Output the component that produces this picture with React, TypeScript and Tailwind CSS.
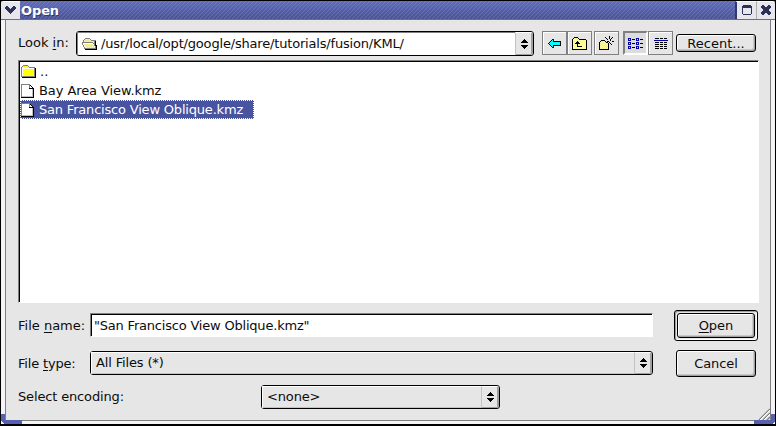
import type { ReactNode } from "react";

const palette: Record<string, string> = {
  k: "#000000", g: "#808080", l: "#c0c0c0", w: "#ffffff", y: "#ffff00",
  p: "#ffff99", v: "#f1f1a0", c: "#00ffff", b: "#0000a8", n: "#2c3158",
};

// Draws a small bitmap, one character per pixel.
function Pixels({ rows, className = "" }: { rows: string[]; className?: string }) {
  return (
    <svg width={rows[0].length} height={rows.length} shapeRendering="crispEdges" className={`block shrink-0 ${className}`}>
      {rows.flatMap((row, y) =>
        [...row].map((ch, x) => palette[ch] && <rect key={`${x}-${y}`} x={x} y={y} width="1" height="1" fill={palette[ch]} />)
      )}
    </svg>
  );
}

const folder = [
  "..ggggg........",
  ".gvyvyvg.......",
  "gvyvyvyvgggggg.",
  "gwwwwwwwwwwwwgk",
  "gwyvyvyvyvyvygk",
  "gwvyvyvyvyvyvgk",
  "gwyvyvyvyvyvygk",
  "gwvyvyvyvyvyvgk",
  "gwyvyvyvyvyvygk",
  "gwvyvyvyvyvyvgk",
  "gwyvyvyvyvyvygk",
  "ggggggggggggggk",
  ".kkkkkkkkkkkkkk",
];
const openFolder = [
  "...ggggg.......",
  "..gvyvyvg......",
  ".gvyvyvyvggggg.",
  ".gyvyvyvyvyvgk.",
  "gggggggggggvgk.",
  "gwwwwwwwwwwggk.",
  "gwvyvyvyvyvwgk.",
  ".gwvyvyvyvyvgkk",
  ".gwyvyvyvyvywgk",
  "..gwvyvyvyvyvgk",
  "..ggggggggggggk",
  "...kkkkkkkkkkkk",
];
const file = [
  "ggggggggg....",
  "gwwwwwwwgk...",
  "gwwwwwwwgwk..",
  "gwwwwwwwgwwk.",
  "gwwwwwwwkkkkk",
  "gwwwwwwwwwwlk",
  "gwwwwwwwwwwlk",
  "gwwwwwwwwwwlk",
  "gwwwwwwwwwwlk",
  "gwwwwwwwwwwlk",
  "gwwwwwwwwwwlk",
  "gwwwwwwwwwwlk",
  "glllllllllllk",
  "kkkkkkkkkkkkk",
];
const back = [
  "....kk.......",
  "...kck.......",
  "..kcckkkkkkkk",
  ".kccccccccck.",
  "kcccccccccck.",
  ".kccccccccck.",
  "..kcckkkkkkkk",
  "...kck.......",
  "....kk.......",
].map((row) => row.replace(/ck\.$/, "cck"));
const parent = [
  "..kkkk.........",
  ".kppppk........",
  "kppppppkkkkkkk.",
  "kpppppppppppppk",
  "kppppkppppppppk",
  "kpppkkkpppppppk",
  "kppkkkkkppppppk",
  "kppppkppppppppk",
  "kppppkppppppppk",
  "kppppkkkkkppppk",
  "kpppppppppppppk",
  "kpppppppppppppk",
  "kkkkkkkkkkkkkkk",
];
const create = [
  "..........k....",
  "......k...k..k.",
  ".......k..k.k..",
  "........k..k...",
  "..kkkk.....k...",
  ".kpypyk.kk...kk",
  "kpypypykk.k....",
  "kypypypypk.k...",
  "kpypypypyk..k..",
  "kypypypypk.....",
  "kpypypypyk.....",
  "kypypypypk.....",
  "kpypypypyk.....",
  "kkkkkkkkkk.....",
];
const listIcon = [
  "bbb.....bbb....",
  "b.b.kkk.b.b.kkk",
  "bbb.....bbb....",
  "...............",
  "bbb.....bbb....",
  "b.b.kkk.b.b.kkk",
  "bbb.....bbb....",
  "...............",
  "bbb.....bbb....",
  "b.b.kkk.b.b.kkk",
  "bbb.....bbb....",
];
const detail = [
  ".kkkk.kkk.kkk.",
  "..............",
  "bbbbbbbbbbbbbb",
  "..............",
  ".kkkk.kkk.kkk.",
  "..............",
  ".kkkk.kkk.kkk.",
  "..............",
  ".kkkk.kkk.kkk.",
  "..............",
  ".kkkk.kkk.kkk.",
];
const spin = [
  "...k...",
  "..kkk..",
  ".kkkkk.",
  "kkkkkkk",
  ".......",
  ".......",
  "kkkkkkk",
  ".kkkkk.",
  "..kkk..",
  "...k...",
];
const chevron = [
  ".nn.....nn.",
  "nnnn...nnnn",
  "nnnnn.nnnnn",
  ".nnnnnnnnn.",
  "..nnnnnnn..",
  "...nnnnn...",
  "....nnn....",
  ".....n.....",
];
const maximize = [
  ".nnnnnnnn.",
  "nnnnnnnnnn",
  "nnnnnnnnnn",
  "n........n",
  "n........n",
  "n........n",
  "n........n",
  "n........n",
  "n........n",
  ".nnnnnnnn.",
];
const close = [
  ".nn....nn.",
  "nnnn..nnnn",
  "nnnnnnnnnn",
  ".nnnnnnnn.",
  "..nnnnnn..",
  "..nnnnnn..",
  ".nnnnnnnn.",
  "nnnnnnnnnn",
  "nnnn..nnnn",
  ".nn....nn.",
];

function Combo({ className, children, light = false }: { className: string; children: ReactNode; light?: boolean }) {
  return (
    <div className={`flex rounded-[3px] border border-black ${light ? "bg-white" : "bg-[#e6e6e6]"} ${className}`}>
      <div className={`flex min-w-0 flex-1 items-center border-t border-l pl-1 ${light ? "border-[#808080]" : "border-b border-white border-b-[#c3c3c3]"}`}>
        {children}
      </div>
      <div className="flex w-[18px] items-center justify-center rounded-r-[2px] border-y border-r-2 border-l border-t-white border-r-[#a0a0a0] border-b-[#a0a0a0] border-l-[#c3c3c3] bg-[#e6e6e6]">
        <Pixels rows={spin} className="ml-px" />
      </div>
    </div>
  );
}

function Button({ className, children }: { className: string; children: ReactNode }) {
  return (
    <button className={`flex items-center justify-center rounded-[3px] border border-black bg-[#e6e6e6] shadow-[inset_1px_1px_0_#fff,inset_-1px_-1px_0_#a0a0a0,inset_-2px_-2px_0_#c8c8c8] ${className}`}>
      {children}
    </button>
  );
}

function Tool({ rows, on = false, className = "" }: { rows: string[]; on?: boolean; className?: string }) {
  return (
    <button className={`flex h-6 w-[25px] items-center justify-center border ${on ? "border-2 border-[#808080] border-r-white border-b-white bg-[#dcdcdc]" : "border-[#808080] bg-[#e6e6e6] shadow-[inset_1px_1px_0_#fff]"} ${className}`}>
      <Pixels rows={rows} />
    </button>
  );
}

function U({ children }: { children: ReactNode }) {
  return <span className="underline decoration-1 underline-offset-2">{children}</span>;
}

export default function App() {
  return (
    <div className="relative flex h-[426px] w-[776px] flex-col overflow-hidden bg-black pt-px pr-px pb-0.5 pl-px font-['DejaVu_Sans',sans-serif] text-[13px] leading-4 whitespace-pre text-[#0c0c0c]">
      <header className="flex h-[19px] shrink-0 border-b border-[#707070] bg-[linear-gradient(180deg,rgba(104,118,210,0.5),rgba(60,68,140,0.45)),repeating-linear-gradient(135deg,#8088b4_0px,#8088b4_0.8px,#5660a6_1.2px,#5660a6_2.83px)]">
        <div className="flex w-[19px] justify-center rounded-tl-[3px] border-t border-white bg-[#e8e6ed] pt-1">
          <Pixels rows={chevron} />
        </div>
        <h1 className="flex-1 pl-[1px] text-[13px] leading-[19px] font-bold text-white [text-shadow:1px_1px_0_#30386f]"><span className="tracking-[-0.1px]">Open</span></h1>
        <div className="flex w-[21px] justify-center border-t border-l-2 border-t-white border-l-[#30386f] bg-[#e8e6ed] pt-[3px]">
          <Pixels rows={maximize} />
        </div>
        <div className="flex w-[19px] justify-center rounded-tr-[3px] border-t border-l border-white border-l-[#b0b0b0] bg-[#e8e6ed] pt-[3px]">
          <Pixels rows={close} />
        </div>
      </header>
      <div className="flex min-h-0 flex-1 bg-[#f5f3f5] px-1 pb-[3px]">
        <main className="flex min-w-0 flex-1 flex-col border-x border-b border-[#808080] bg-[#e6e6e6] pr-3 pl-3">
          <div className="mt-[11px] flex h-[25px] shrink-0 items-start">
            <label className="mt-1 w-[58px]">Look <U>i</U>n:</label>
            <Combo light className="h-[25px] w-[458px]">
              <Pixels rows={openFolder} />
              <span className="ml-1 tracking-[-0.18px]">/usr/local/opt/google/share/tutorials/fusion/KML/</span>
            </Combo>
            <Tool rows={back} className="ml-2" />
            <Tool rows={parent} />
            <Tool rows={create} className="ml-0.5" />
            <Tool rows={listIcon} on className="ml-1" />
            <Tool rows={detail} />
            <Button className="mt-[3px] ml-[3px] h-[18px] w-[80px]"><span className="pt-px">Recent...</span></Button>
          </div>
          <div className="mt-1 h-[243px] w-[741px] shrink-0 border border-[#808080] border-r-white border-b-white bg-white shadow-[inset_1px_1px_0_#000]">
            <div className="mt-px ml-[1px] flex h-[19px] items-center pl-px"><Pixels rows={folder} /><span className="ml-1">..</span></div>
            <div className="ml-[1px] flex h-[19px] items-center pl-px"><Pixels rows={file} /><span className="ml-[5px] tracking-[-0.08px]">Bay Area View.kmz</span></div>
            <div className="ml-[1px] flex h-[19px] w-[234px] items-center border border-dotted border-white bg-[#4854a0] text-white"><Pixels rows={file} /><span className="ml-[5px] tracking-[-0.19px]">San Francisco View Oblique.kmz</span></div>
          </div>
          <div className="mt-[7px] flex h-[31px] shrink-0">
            <label className="mt-2 w-[72px]">File <U>n</U>ame:</label>
            <div className="mt-[3px] h-6 w-[563px] border border-[#808080] border-r-white border-b-white bg-white pt-1 pl-[3px] tracking-[-0.2px] shadow-[inset_1px_1px_0_#000]">"San Francisco View Oblique.kmz"</div>
            <div className="ml-[21px] h-[31px] w-[84px] rounded-[3px] border border-black bg-[#e6e6e6] p-[2px] shadow-[inset_1px_1px_0_#a0a0a0,inset_-1px_-1px_0_#fff]">
              <Button className="h-[25px] w-[78px]"><span><U>O</U>pen</span></Button>
            </div>
          </div>
          <div className="mt-[9px] flex h-[27px] shrink-0">
            <label className="mt-[6px] w-[72px] tracking-[-0.18px]">File <U>t</U>ype:</label>
            <Combo className="mt-px h-6 w-[563px]"><span className="tracking-[-0.15px]">All Files (*)</span></Combo>
            <Button className="ml-[23px] h-[27px] w-[80px]"><span className="tracking-[-0.1px]">Cancel</span></Button>
          </div>
          <div className="mt-2 flex shrink-0">
            <label className="mt-1 w-[243px] tracking-[-0.15px]">Select encoding:</label>
            <Combo className="h-6 w-[239px]"><span className="tracking-[-0.15px]">{"<none>"}</span></Combo>
          </div>
        </main>
      </div>
      <svg className="pointer-events-none absolute bottom-0 left-0" width="776" height="22" shapeRendering="crispEdges">
        <path d="M1 10h4v6h17v4H4l-3-3z M775 10h-4v6h-17v4h18l3-3z" fill="#5660b0" />
        <path d="M759 16l11-11M763 16l7-7M767 16l3-3" stroke="#808080" strokeWidth="1.4" shapeRendering="auto" />
        <path d="M760 16l10-10M764 16l6-6" stroke="#fff" />
      </svg>
    </div>
  );
}
